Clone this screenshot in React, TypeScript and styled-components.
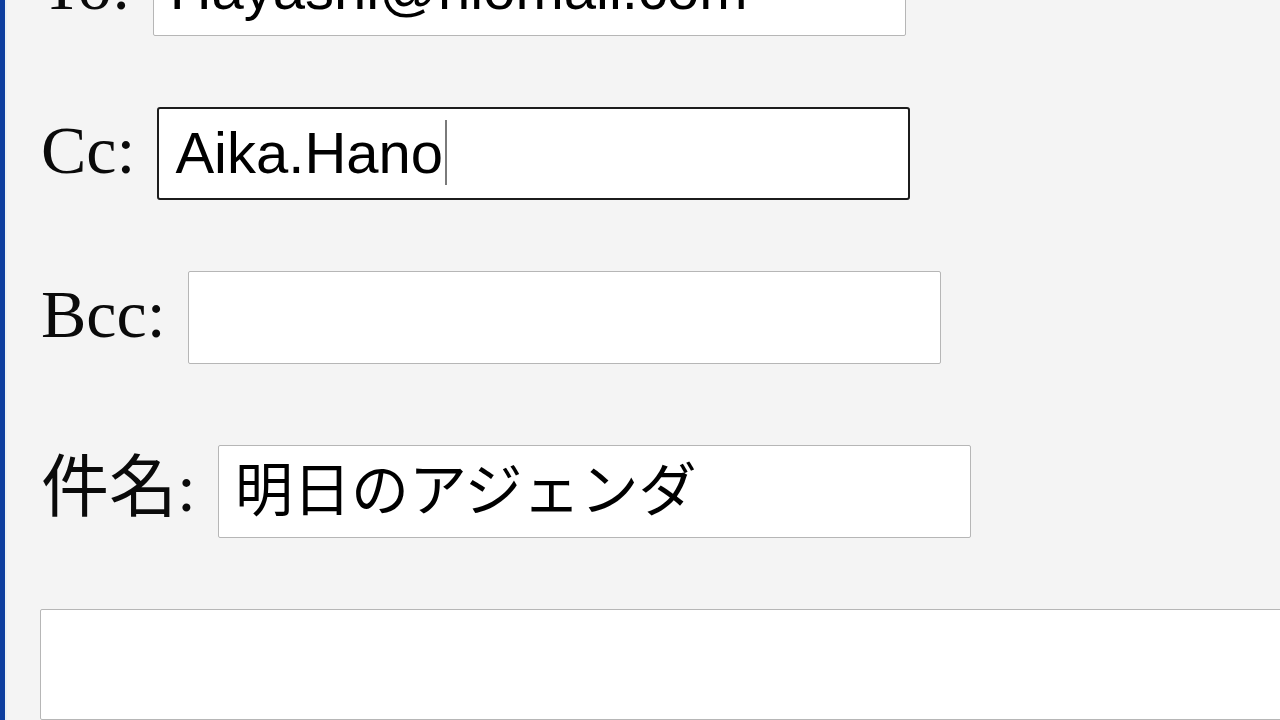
import React from "react";
import styled, { createGlobalStyle } from "styled-components";

const GlobalStyle = createGlobalStyle`
  html, body {
    margin: 0;
    padding: 0;
    background: #f4f4f4;
    overflow: hidden;
  }
  * { box-sizing: border-box; }
`;

const Page = styled.div`
  display: flex;
  width: 1280px;
  height: 720px;
  overflow: hidden;
  background: #f4f4f4;
`;

const SideBar = styled.div`
  flex: 0 0 5px;
  background: #0c3e9f;
  border-right: 2px solid #e8f0f6;
  box-sizing: content-box;
`;

const Form = styled.div`
  display: flex;
  flex-direction: column;
  align-items: flex-start;
  gap: 71px;
  margin-top: -57px;
  padding-left: 34px;
`;

const Row = styled.div<{ $extra?: number }>`
  display: flex;
  align-items: baseline;
  gap: 22px;
  margin-top: ${(p) => p.$extra ?? 0}px;
`;

const Label = styled.div`
  font-family: "Liberation Serif", "Noto Sans CJK JP", serif;
  font-size: 68px;
  line-height: 1;
  color: #0a0a0a;
  white-space: nowrap;
`;

const Field = styled.div<{ $focused?: boolean }>`
  display: flex;
  align-items: center;
  width: 753px;
  height: 93px;
  padding: 0 16px;
  background: #ffffff;
  border: ${(p) => (p.$focused ? "2px solid #1c1c1c" : "1px solid #b6b6b6")};
  border-radius: ${(p) => (p.$focused ? "3px" : "2px")};
`;

const Value = styled.span`
  font-family: "Liberation Sans", "Noto Sans CJK JP", sans-serif;
  font-size: 58px;
  line-height: 1.15;
  color: #000;
  white-space: nowrap;
`;

const Caret = styled.span`
  display: inline-block;
  width: 2px;
  height: 65px;
  margin-left: 2px;
  vertical-align: -12px;
  background: #7a7a7a;
`;

const Body = styled.div`
  width: 1300px;
  height: 300px;
  margin-left: -1px;
  background: #ffffff;
  border: 1px solid #b6b6b6;
  border-radius: 2px;
`;

export default function App() {
  return (
    <>
      <GlobalStyle />
      <Page>
        <SideBar />
        <Form>
          <Row>
            <Label>To:</Label>
            <Field>
              <Value>Hayashi@hiomail.com</Value>
            </Field>
          </Row>
          <Row>
            <Label>Cc:</Label>
            <Field $focused>
              <Value>
                Aika.Hano
                <Caret />
              </Value>
            </Field>
          </Row>
          <Row>
            <Label>Bcc:</Label>
            <Field>
              <Value>{"\u200b"}</Value>
            </Field>
          </Row>
          <Row $extra={10}>
            <Label>件名:</Label>
            <Field>
              <Value>明日のアジェンダ</Value>
            </Field>
          </Row>
          <Body />
        </Form>
      </Page>
    </>
  );
}
